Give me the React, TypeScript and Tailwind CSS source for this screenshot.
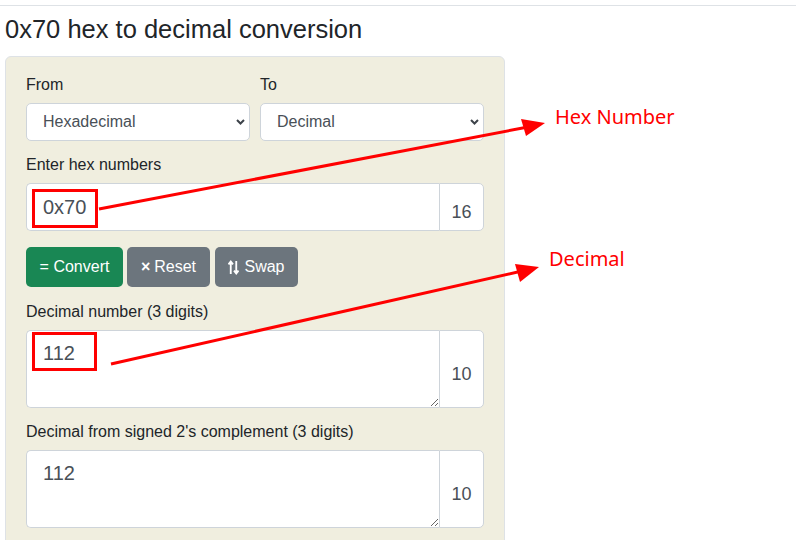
import React from 'react';

const font = { fontFamily: '"Liberation Sans", Arial, sans-serif' };

function Label({ children }: { children: React.ReactNode }) {
  return <div className="mb-[6px] pt-[1px] text-[16px] leading-6 text-[#212529]">{children}</div>;
}

function Select({ value }: { value: string }) {
  return (
    <div className="relative flex-1">
      <div className="flex h-[38px] items-center rounded-[5px] border border-[#ced4da] bg-white pl-4 text-[16px] text-[#495057]">
        {value}
      </div>
      <svg aria-hidden="true" viewBox="0 0 9 6" className="absolute right-[5px] top-[16px] h-[6px] w-[9px] text-[#3d434a]" fill="none" stroke="currentColor" strokeWidth="2">
        <path d="M1 1l3.5 3.5L8 1" />
      </svg>
    </div>
  );
}

function Addon({ base }: { base: string }) {
  return (
    <div className="flex w-[45px] shrink-0 items-center justify-center rounded-r-[5px] border border-[#ced4da] bg-white pt-[10px] text-[18px] leading-6 text-[#495057]">
      {base}
    </div>
  );
}

function Output({ value, base }: { value: string; base: string }) {
  return (
    <div className="flex h-[78px]">
      <textarea
        readOnly
        value={value}
        className="h-full flex-1 rounded-l-[5px] border border-r-0 border-[#ced4da] bg-white px-4 pt-[7px] text-[20px] leading-[30px] text-[#495057] outline-none"
        style={font}
      />
      <Addon base={base} />
    </div>
  );
}

export default function App() {
  return (
    <div className="relative h-[540px] w-[796px] overflow-hidden bg-white" style={font}>
      <div className="pt-[5px]">
        <div className="border-t border-[#dee2e6]" />
      </div>
      <h1 className="ml-[5px] mt-[9px] text-[25.5px] leading-[29px] text-[#212529]">0x70 hex to decimal conversion</h1>

      <div className="ml-[5px] mt-[12px] h-[520px] w-[500px] rounded-md border border-[#dee2e6] bg-[#f0eedf] px-5 pt-[15px]">
        <div className="flex gap-[10px]">
          <div className="flex flex-1 flex-col">
            <Label>From</Label>
            <Select value="Hexadecimal" />
          </div>
          <div className="flex flex-1 flex-col">
            <Label>To</Label>
            <Select value="Decimal" />
          </div>
        </div>

        <div className="mt-[11px]">
          <Label>Enter hex numbers</Label>
          <div className="flex h-[48px]">
            <div className="flex flex-1 items-center rounded-l-[5px] border border-r-0 border-[#ced4da] bg-white px-4 text-[20px] text-[#495057]">
              0x70
            </div>
            <Addon base="16" />
          </div>
        </div>

        <div className="mt-4 flex gap-1 text-[16px] text-white">
          <button className="flex h-10 w-[97px] items-center justify-center rounded-[5px] bg-[#198754]">= Convert</button>
          <button className="flex h-10 w-[83px] items-center justify-center gap-1 rounded-[5px] bg-[#6c757d]">
            <span className="font-bold">×</span> Reset
          </button>
          <button className="ml-[1px] flex h-10 w-[83px] items-center justify-center gap-[5px] rounded-[5px] bg-[#6c757d]">
            <svg aria-hidden="true" viewBox="0 0 12 16" className="h-[15px] w-[11px]" fill="none" stroke="currentColor" strokeWidth="2">
              <path d="M3 15V2M0.5 4.5L3 1.5l2.5 3" />
              <path d="M9 1v13M6.5 11.5L9 14.5l2.5-3" />
            </svg>
            Swap
          </button>
        </div>

        <div className="mt-[12px]">
          <Label>Decimal number (3 digits)</Label>
          <Output value="112" base="10" />
        </div>

        <div className="mt-[11px]">
          <Label>Decimal from signed 2's complement (3 digits)</Label>
          <Output value="112" base="10" />
        </div>
      </div>

      {/* annotation overlay */}
      <svg className="pointer-events-none absolute left-0 top-0 h-[540px] w-[796px]" viewBox="0 0 796 540">
        <rect x="33.5" y="190.5" width="63" height="36" fill="none" stroke="#ff0000" strokeWidth="3" />
        <line x1="99" y1="209" x2="528" y2="127" stroke="#ff0000" strokeWidth="3" />
        <polygon points="545,123 521,119 526,136" fill="#ff0000" />
        <rect x="33.5" y="333.5" width="62" height="36" fill="none" stroke="#ff0000" strokeWidth="3" />
        <line x1="111" y1="364" x2="522" y2="271" stroke="#ff0000" strokeWidth="3" />
        <polygon points="539,267 515,264 520,282" fill="#ff0000" />
      </svg>
      <div className="absolute left-[555px] top-[103px] text-[20px] leading-7 text-[#ff0000]" style={{ fontFamily: '"Noto Sans", sans-serif' }}>
        Hex Number
      </div>
      <div className="absolute left-[549px] top-[245px] text-[20px] leading-7 text-[#ff0000]" style={{ fontFamily: '"Noto Sans", sans-serif' }}>
        Decimal
      </div>
    </div>
  );
}
